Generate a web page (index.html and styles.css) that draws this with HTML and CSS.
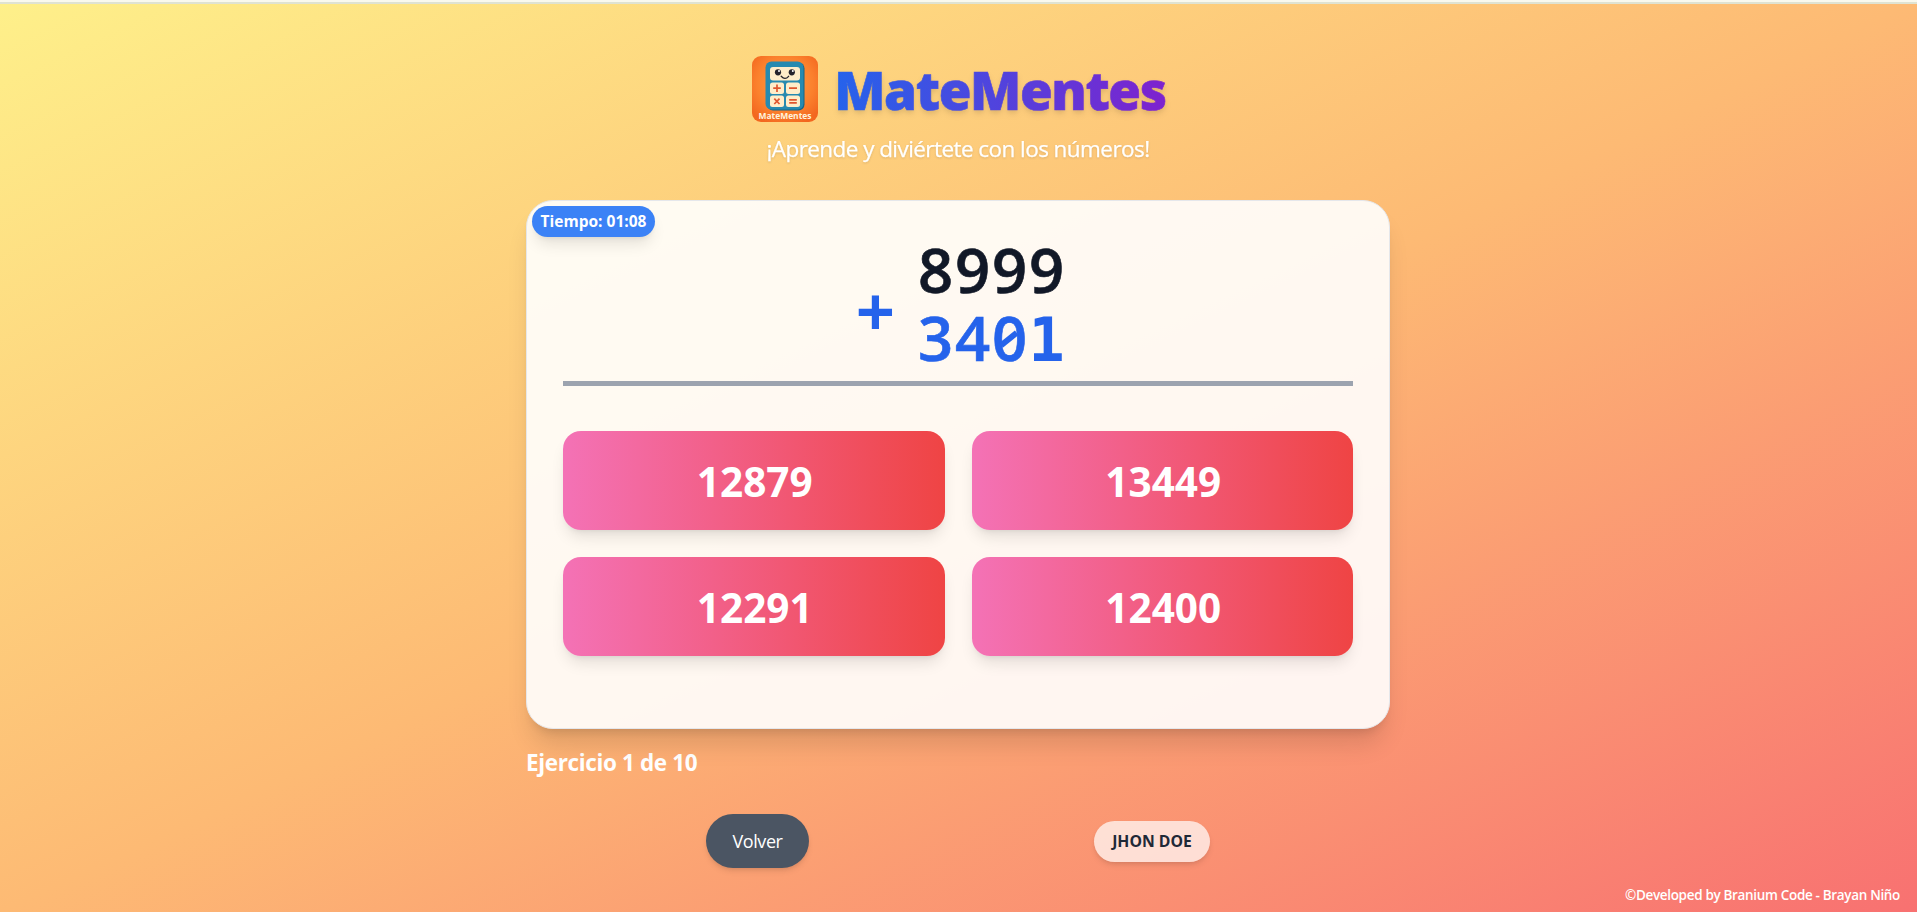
FILE: index.html
```html
<!DOCTYPE html>
<html lang="es">
<head>
<meta charset="utf-8">
<title>MateMentes</title>
<link rel="stylesheet" href="styles.css">
</head>
<body>
<div class="page">
  <header class="header">
    <div class="brand">
      <svg class="logo" viewBox="0 0 66 66">
        <defs>
          <radialGradient id="logo-bg" cx="50%" cy="42%" r="65%">
            <stop offset="0" stop-color="#ffa044"/><stop offset=".65" stop-color="#fb812d"/><stop offset="1" stop-color="#f3671f"/>
          </radialGradient>
        </defs>
        <rect width="66" height="66" rx="9" fill="url(#logo-bg)"/>
        <rect x="15" y="6.500" width="37.500" height="48" rx="6" fill="#176586"/>
        <rect x="13.500" y="5.500" width="38" height="48" rx="6" fill="#268ab0"/>
        <g fill="#ffedc9">
          <rect x="18" y="11" width="30" height="13.500" rx="3"/>
          <rect x="18" y="26.500" width="14" height="11.500" rx="2.500"/>
          <rect x="34" y="26.500" width="14" height="11.500" rx="2.500"/>
          <rect x="18" y="39.500" width="14" height="11.500" rx="2.500"/>
          <rect x="34" y="39.500" width="14" height="11.500" rx="2.500"/>
        </g>
        <circle cx="26" cy="16.300" r="3.100" fill="#25232c"/>
        <circle cx="39.800" cy="16.300" r="3.100" fill="#25232c"/>
        <circle cx="27" cy="15" r="1" fill="#fff"/>
        <circle cx="40.800" cy="15" r="1" fill="#fff"/>
        <path d="M29.200 20.300q3.800 4.200 7.400 0" fill="none" stroke="#25232c" stroke-width="1.300" stroke-linecap="round"/>
        <path d="M21.200 32.200h7.600M25 28.400v7.600M37 32.200h8M22.300 42.600l5.200 5.400M27.500 42.600l-5.200 5.400M37.200 43.800h7.600M37.200 46.800h7.600" stroke="#df552e" stroke-width="1.700"/>
        <text x="33" y="62.500" text-anchor="middle" textLength="53" lengthAdjust="spacingAndGlyphs" class="logo-text">MateMentes</text>
      </svg>
      <h1 class="title">MateMentes</h1>
    </div>
    <p class="subtitle">¡Aprende y diviértete con los números!</p>
  </header>

  <main class="card">
    <div class="timer">Tiempo: 01:08</div>
    <div class="operation">
      <span class="operator">+</span>
      <div class="operands">
        <div class="operand"><span>8</span><span>9</span><span>9</span><span>9</span></div>
        <div class="operand second"><span>3</span><span>4</span><span class="zero">0</span><span class="one">1</span></div>
      </div>
    </div>
    <div class="answers">
      <button class="answer">12879</button>
      <button class="answer">13449</button>
      <button class="answer">12291</button>
      <button class="answer">12400</button>
    </div>
  </main>

  <div class="progress">Ejercicio 1 de 10</div>
  <div class="actions">
    <div class="cell"><button class="back">Volver</button></div>
    <div class="cell"><span class="user">JHON DOE</span></div>
  </div>
  <footer class="credit">©Developed by Branium Code - Brayan Niño</footer>
</div>
</body>
</html>
```
FILE: styles.css
```css
* { box-sizing: border-box; margin: 0; padding: 0; }
html { font-size: 18px; }
body {
  font-family: "Open Sans", "Noto Sans", sans-serif;
  background: #fffdf0;
  color: #fff;
}
button { border: 0; font-family: inherit; color: inherit; }
.page {
  position: relative;
  height: 912px;
  overflow: hidden;
  padding-right: 1px;
  border-top: 2px solid #f9f9ee;
  box-shadow: inset 0 2px 0 #dfe3d2;
  background: linear-gradient(to bottom right, #fef08a, #fdba74, #f87171);
  background-origin: border-box;
  display: flex;
  flex-direction: column;
  align-items: center;
}
.header { display: flex; flex-direction: column; align-items: center; padding-top: 52px; height: 198px; }
.brand { display: flex; align-items: center; height: 68px; gap: 16px; margin-left: 2px; }
.logo { width: 66px; height: 66px; display: block; margin-top: 1px; }
.logo-text { font: 700 8px "Open Sans", sans-serif; fill: #fff3dc; }
.title {
  font-family: "Noto Sans", "Open Sans", sans-serif;
  font-size: 53px;
  font-weight: 900;
  line-height: 70px;
  letter-spacing: -1.400px;
  padding-top: 3px;
  background: linear-gradient(to right, #2563eb, #7e22ce);
  -webkit-background-clip: text;
  background-clip: text;
  color: transparent;
  -webkit-text-stroke: .6px transparent;
  filter: drop-shadow(0 4px 3px rgba(0,0,0,.07)) drop-shadow(0 2px 2px rgba(0,0,0,.06));
}
.subtitle {
  margin-top: 9px;
  font-size: 22.500px;
  line-height: 36px;
  letter-spacing: -.560px;
  -webkit-text-stroke: .25px #fff;
  filter: drop-shadow(0 1px 1px rgba(0,0,0,.12));
}
.card {
  position: relative;
  flex: none;
  width: 864px;
  height: 529px;
  padding: 36px;
  border: 1px solid #e5e7eb;
  border-radius: 27px;
  background: rgba(255,255,255,.9);
  box-shadow: 0 20px 25px -5px rgba(0,0,0,.12), 0 8px 10px -6px rgba(0,0,0,.12);
}
.timer {
  position: absolute;
  left: 5px;
  top: 5px;
  width: 123px;
  height: 31px;
  border-radius: 99px;
  background: #3b82f6;
  font-size: 15.500px;
  font-weight: 700;
  line-height: 31px;
  text-align: center;
  box-shadow: 0 10px 15px -3px rgba(0,0,0,.1), 0 4px 6px -4px rgba(0,0,0,.1);
}
.operation {
  display: flex;
  justify-content: center;
  align-items: center;
  height: 149px;
  padding-left: 6px;
  border-bottom: 5px solid #9ca3af;
  font-size: 61.500px;
  font-weight: 600;
  gap: 23px;
}
.operator { font-family: "DejaVu Sans Mono", monospace; font-size: 62px; font-weight: 700; color: #2563eb; line-height: 72px; padding-top: 3px; }
.operands { display: flex; flex-direction: column; color: #111827; padding-bottom: 13px; }
.operand { display: flex; align-items: baseline; height: 68px; line-height: 68px; -webkit-text-stroke: .6px currentColor; }
.operand span { position: relative; width: 37px; display: flex; justify-content: center; }
.second { color: #2563eb; }
/* Slash across the zero */
.operand .zero::after {
  content: "";
  position: absolute;
  left: 8px;
  top: 33px;
  width: 20px;
  height: 6px;
  background: #2563eb;
  transform: rotate(-39deg);
}
.operand .one { font-family: "DejaVu Sans Mono", monospace; font-size: 60px; font-weight: 700; -webkit-text-stroke: 0; }
.answers { display: grid; grid-template-columns: 1fr 1fr; grid-auto-rows: 99px; gap: 27px; margin-top: 45px; }
.answer {
  border-radius: 18px;
  background: linear-gradient(to right, #f472b6, #ef4444);
  font-size: 40.500px;
  font-weight: 700;
  padding: 2px 0 0 2px;
  box-shadow: 0 10px 15px -3px rgba(0,0,0,.1), 0 4px 6px -4px rgba(0,0,0,.1);
}
.progress { width: 864px; margin-top: 18px; font-size: 22.500px; font-weight: 700; line-height: 32px; letter-spacing: -.370px; }
.actions { display: flex; width: 790px; height: 54px; margin: 35px 7px 0 0; }
.cell { flex: 1; display: flex; align-items: center; justify-content: center; }
.back {
  width: 103px;
  height: 54px;
  border-radius: 27px;
  background: #4b5563;
  font-size: 18px;
  letter-spacing: -.400px;
  padding-left: 1px;
  box-shadow: 0 4px 6px -1px rgba(0,0,0,.1), 0 2px 4px -2px rgba(0,0,0,.1);
}
.user {
  width: 116px;
  height: 41px;
  border-radius: 21px;
  background: rgba(255,255,255,.7);
  color: #1f2937;
  font-size: 15.750px;
  font-weight: 700;
  line-height: 41px;
  text-align: center;
  box-shadow: 0 4px 6px -1px rgba(0,0,0,.1), 0 2px 4px -2px rgba(0,0,0,.1);
}
.credit { align-self: flex-end; margin: 18px 16px 0 0; font-size: 13.500px; font-weight: 600; line-height: 18px; letter-spacing: -.330px; }
```
